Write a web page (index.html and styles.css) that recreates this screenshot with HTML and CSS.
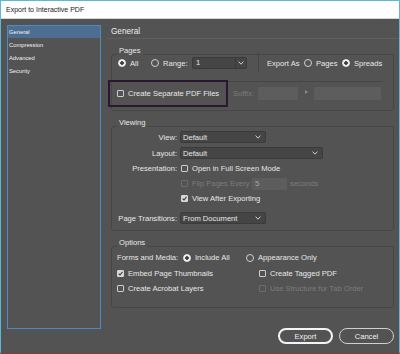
FILE: index.html
```html
<!DOCTYPE html>
<html>
<head>
<meta charset="utf-8">
<title>Export to Interactive PDF</title>
<link rel="stylesheet" href="styles.css">
</head>
<body>
<div class="window">
  <div class="titlebar">Export to Interactive PDF</div>
  <div class="body">
    <ul class="sidebar">
      <li class="sel">General</li>
      <li>Compression</li>
      <li>Advanced</li>
      <li>Security</li>
    </ul>
    <div class="main">
      <div class="heading">General</div>

      <div class="glabel">Pages</div>
      <div class="group">
        <div class="pages-row">
          <span class="opt w33"><span class="rd on"></span>All</span>
          <span class="opt w41"><span class="rd"></span>Range:</span>
          <span class="combo">
            <span class="combo-val">1</span>
            <span class="combo-btn"><svg width="6" height="4" viewBox="0 0 6 4"><path d="M.6.6 3 3.2 5.4.6" stroke="#cfcfcf" stroke-width="1" fill="none"/></svg></span>
          </span>
          <span class="vsep"></span>
          <span class="export-as">Export As</span>
          <span class="opt w38"><span class="rd"></span>Pages</span>
          <span class="opt"><span class="rd on"></span>Spreads</span>
        </div>
        <div class="hsep"></div>
        <div class="sep-row">
          <div class="callout"><span class="cb"></span>Create Separate PDF Files</div>
          <span class="dim suffix">Suffix:</span>
          <span class="field w40"></span>
          <span class="tri"></span>
          <span class="field w67"></span>
        </div>
      </div>

      <div class="glabel">Viewing</div>
      <div class="group viewing">
        <span class="vlabel r16">View:</span>
        <span class="vctl"><span class="dd w86"><span>Default</span><svg width="6" height="4" viewBox="0 0 6 4"><path d="M.6.6 3 3.2 5.4.6" stroke="#cfcfcf" stroke-width="1" fill="none"/></svg></span></span>

        <span class="vlabel">Layout:</span>
        <span class="vctl"><span class="dd w143"><span>Default</span><svg width="6" height="4" viewBox="0 0 6 4"><path d="M.6.6 3 3.2 5.4.6" stroke="#cfcfcf" stroke-width="1" fill="none"/></svg></span></span>

        <span class="vlabel">Presentation:</span>
        <span class="vctl"><span class="cb"></span><span class="ctext">Open in Full Screen Mode</span></span>

        <span class="vlabel"></span>
        <span class="vctl dim"><span class="cb dis"></span><span class="ctext flip">Flip Pages Every:</span><span class="field w35 num">5</span><span class="secs">seconds</span></span>

        <span class="vlabel"></span>
        <span class="vctl"><span class="cb on"><svg width="5" height="5" viewBox="0 0 5 5"><path d="M.6 2.6 2 4 4.5 .9" stroke="#3a3a3a" stroke-width="1.1" fill="none"/></svg></span><span class="ctext">View After Exporting</span></span>

        <span class="vlabel">Page Transitions:</span>
        <span class="vctl"><span class="dd w86"><span>From Document</span><svg width="6" height="4" viewBox="0 0 6 4"><path d="M.6.6 3 3.2 5.4.6" stroke="#cfcfcf" stroke-width="1" fill="none"/></svg></span></span>
      </div>

      <div class="glabel">Options</div>
      <div class="group options">
        <div class="orow h15">
          <span class="flabel">Forms and Media:</span>
          <span class="opt w63"><span class="rd on"></span>Include All</span>
          <span class="opt"><span class="rd"></span>Appearance Only</span>
        </div>
        <div class="orow h16">
          <span class="opt col1"><span class="cb on"><svg width="5" height="5" viewBox="0 0 5 5"><path d="M.6 2.6 2 4 4.5 .9" stroke="#3a3a3a" stroke-width="1.1" fill="none"/></svg></span>Embed Page Thumbnails</span>
          <span class="opt"><span class="cb"></span>Create Tagged PDF</span>
        </div>
        <div class="orow h15">
          <span class="opt col1"><span class="cb"></span>Create Acrobat Layers</span>
          <span class="opt dim"><span class="cb dis"></span>Use Structure for Tab Order</span>
        </div>
      </div>

      <div class="buttons">
        <span class="btn primary">Export</span>
        <span class="btn">Cancel</span>
      </div>
    </div>
  </div>
</div>
</body>
</html>
```
FILE: styles.css
```css
* { box-sizing: border-box; }
html, body { margin: 0; padding: 0; }
body { background: #535353; font-family: "Liberation Sans", Arial, sans-serif; }

.window {
  width: 400px; height: 354px;
  border: 1px solid #5cb8d4;
  border-bottom: 2px solid #6a4848;
  background: #535353;
  display: flex; flex-direction: column;
  color: #e8e8e8; font-size: 7.6px;
  overflow: hidden;
}
.titlebar {
  height: 18px; flex: none;
  background: #fff; border-bottom: 1px solid #d6d6d6;
  color: #1a1a1a; font-size: 7px;
  padding-left: 5px;
  display: flex; align-items: center;
}
.body { flex: 1; display: flex; padding: 6px 0 0 6px; min-height: 0; }

.sidebar {
  list-style: none; margin: 0; padding: 0;
  width: 94px; height: 304px; flex: none;
  border: 1px solid #4d8ac4;
  font-size: 5.8px; color: #f2f2f2;
}
.sidebar li { height: 12px; line-height: 12px; margin-bottom: 1px; padding-left: 1px; }
.sidebar li.sel { background: #4d6e91; }

.main { flex: 1; margin-left: 6px; display: flex; flex-direction: column; min-width: 0; }
.heading {
  height: 14px; line-height: 13px;
  border-bottom: 1px solid #606060;
  padding-left: 4px; font-size: 8.2px; color: #ededed;
}

.glabel {
  align-self: flex-start;
  height: 10px; line-height: 10px;
  margin: 7px 0 -2px 10px; padding: 0 2px;
  background: #535353; position: relative; z-index: 1;
}
.group {
  margin: 0 5px 0 4px;
  border: 1px solid #464646; border-radius: 3px;
}

.opt { display: flex; align-items: center; gap: 4px; flex: none; white-space: nowrap; }
.w33 { width: 33px; } .w41 { width: 41px; } .w38 { width: 38px; } .w63 { width: 63px; }

.rd { width: 8px; height: 8px; border-radius: 50%; border: 1px solid #cfcfcf; flex: none; }
.rd.on { border-color: #ececec; background: radial-gradient(circle, #3c3c3c 0 1.5px, #ececec 2.1px); }

.cb {
  width: 7px; height: 7px; flex: none;
  border: 1px solid #cdcdcd; border-radius: 1px;
  display: flex; align-items: center; justify-content: center;
}
.cb.on { background: #d9d9d9; border-color: #d9d9d9; }
.cb.dis { border-color: #6c6c6c; }
.dim { color: #7c7c7c; }

.pages-row { height: 16px; display: flex; align-items: center; padding-left: 6px; margin-bottom: 10px; }
.combo {
  width: 55px; height: 12px; flex: none;
  display: flex; border: 1px solid #3a3a3a; border-radius: 2px; background: #454545;
}
.combo-val { flex: 1; padding-left: 3px; line-height: 10px; }
.combo-btn { width: 11px; border-left: 1px solid #3a3a3a; display: flex; align-items: center; justify-content: center; }
.vsep { width: 1px; height: 20px; background: #464646; margin: 0 8px 0 11px; flex: none; }
.export-as { width: 37px; flex: none; }

.hsep { height: 1px; background: #464646; margin-right: 10px; }
.sep-row { display: flex; align-items: center; height: 27px; margin-top: -2px; margin-bottom: 3px; }
.callout {
  width: 120px; height: 27px; flex: none;
  margin-left: -4px; padding-left: 7px;
  border: 2px solid #29182f;
  display: flex; align-items: center; gap: 4px;
}
.suffix { margin-left: 5px; width: 25px; flex: none; }
.field { height: 13px; background: #5d5d5d; border-radius: 1px; flex: none; }
.w40 { width: 40px; } .w67 { width: 67px; } .w35 { width: 35px; height: 12px; }
.tri {
  width: 0; height: 0; flex: none; margin: -4px 6px 0 7px;
  border-top: 2.5px solid transparent; border-bottom: 2.5px solid transparent;
  border-left: 3px solid #8a8a8a;
}

.viewing {
  display: grid;
  grid-template-columns: 65px 1fr;
  grid-template-rows: 16px 16px 15px 15px 15px 16px;
  column-gap: 3px; row-gap: 0;
  padding: 2px 0 4px;
}
.viewing .vlabel:nth-last-child(2) { margin-top: 4px; }
.viewing .vctl:last-child { margin-top: 4px; }
.viewing { grid-template-rows: 16px 16px 15px 15px 15px 20px; }
.vlabel { text-align: right; align-self: center; white-space: nowrap; }
.vctl { display: flex; align-items: center; min-width: 0; white-space: nowrap; }
.vctl > .cb { margin-left: 1px; }
.ctext { margin-left: 4px; }
.flip { width: 59px; flex: none; }
.dd {
  height: 12px; flex: none;
  display: flex; align-items: center; justify-content: space-between;
  padding: 0 4px 0 2px;
  background: #454545; border: 1px solid #3a3a3a; border-radius: 2px;
}
.w86 { width: 86px; } .w143 { width: 143px; }
.num { color: #a6a6a6; padding-left: 3px; line-height: 12px; margin-left: 1px; }
.secs { margin-left: 3px; }

.options { padding: 3px 0 11px 5px; }
.orow { display: flex; align-items: center; }
.h16 { height: 16px; } .h15 { height: 15px; }
.flabel { width: 66px; flex: none; }
.col1 { width: 142px; }

.buttons { display: flex; justify-content: flex-end; gap: 6px; margin: 20px 5px 0 0; }
.btn {
  width: 55px; height: 16px;
  border-radius: 8px; border: 1.5px solid #d0d0d0;
  display: flex; align-items: center; justify-content: center;
  color: #f0f0f0;
}
.btn.primary { border: 2px solid #f4f4f4; }
```
